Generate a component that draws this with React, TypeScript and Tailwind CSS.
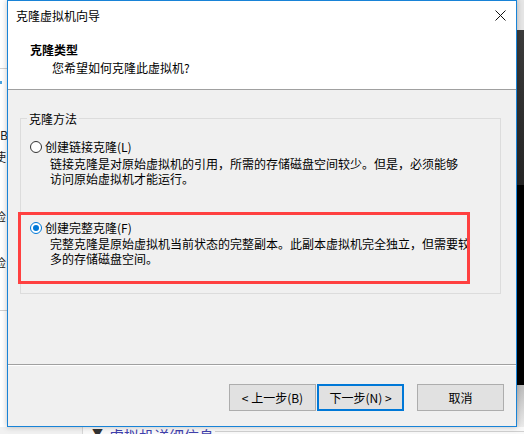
import React from "react";

// Windows-style "clone virtual machine" wizard page, drawn over a bit of the
// desktop behind it (the strips left, right and below the dialog).

const FONT = "font-['Noto_Sans_CJK_SC','Microsoft_YaHei',sans-serif]";

function Radio({ checked }: { checked?: boolean }) {
  if (checked) {
    return (
      <span className="flex h-[12px] w-[12px] shrink-0 items-center justify-center rounded-full border border-[#0078d7] bg-white">
        <span className="h-[6px] w-[6px] rounded-full bg-[#0078d7]" />
      </span>
    );
  }
  return <span className="h-[12px] w-[12px] shrink-0 rounded-full border border-[#333333] bg-white" />;
}

function WizardButton({ label, primary }: { label: string; primary?: boolean }) {
  return (
    <button
      className={
        primary
          ? "flex h-[27px] w-[87px] items-center justify-center border-2 border-[#0078d7] bg-[#e1e1e1] text-[12px] leading-[16px] text-black"
          : "flex h-[27px] w-[87px] items-center justify-center border border-[#adadad] bg-[#e1e1e1] text-[12px] leading-[16px] text-black"
      }
    >
      {label}
    </button>
  );
}

function Desktop() {
  return (
    <>
      {/* left edge of the window behind */}
      <div className="absolute left-0 top-0 h-full w-[7px] overflow-hidden bg-white text-[12px] leading-[16px] text-[#222]">
        <div className="absolute left-0 top-[68px] h-px w-full bg-[#d0d0d0]" />
        <div className="absolute left-0 top-[310px] h-px w-full bg-[#d0d0d0]" />
        <div className="absolute left-0 top-[81px] h-[3px] w-[2px] bg-[#4aa3df]" />
        <span className="absolute left-0 top-[127px]">B</span>
        <span className="absolute left-[-6px] top-[149px]">使</span>
        <span className="absolute left-[-6px] top-[209px]">检</span>
        <span className="absolute left-[-6px] top-[255px]">检</span>
      </div>
      {/* right edge: dark window behind */}
      <div className="absolute left-[517px] top-0 flex h-full w-[7px] flex-col">
        <div className="h-[30px] bg-[#e6e6e6]" />
        <div className="h-[155px] bg-gradient-to-b from-[#3c3c3c] to-[#262626]" />
        <div className="h-[200px] bg-black" />
        <div className="flex-1 bg-gradient-to-b from-[#bdbdbd] to-[#f3f3f3]" />
      </div>
      {/* bottom edge: details pane of the window behind */}
      <div className="absolute left-0 top-[427px] h-[7px] w-full overflow-hidden bg-[#f9f9f9]">
        <div className="absolute left-0 top-0 h-full w-[82px] bg-[#f1f1f1]" />
        <div className="absolute left-[82px] top-0 h-full w-px bg-[#d6d6d6]" />
        <span className="absolute left-[92px] top-[1px] text-[11px] leading-[11px] text-[#333]">▼</span>
        <span className="absolute left-[109px] top-[1px] text-[15px] leading-[15px] text-[#4141ad]">虚拟机详细信息</span>
        <div className="absolute left-[215px] top-[4px] h-px w-[309px] bg-[#d0d0d0]" />
      </div>
    </>
  );
}

export default function App() {
  return (
    <div className={`relative h-[434px] w-[524px] overflow-hidden bg-[#f7f7f7] text-black ${FONT}`}>
      <Desktop />

      <div className="absolute left-[7px] top-0 flex h-[427px] w-[510px] flex-col border border-[#1883d7] bg-[#f0f0f0] text-[12px] shadow-[0_0_6px_rgba(0,0,0,0.25)]">
        {/* title bar */}
        <div className="flex h-[29px] items-center justify-between bg-white pl-[8px] pr-[10px]">
          <span className="leading-[16px]">克隆虚拟机向导</span>
          <svg width="11" height="11" viewBox="0 0 11 11" aria-hidden>
            <path d="M0.5 0.5 L10.5 10.5 M10.5 0.5 L0.5 10.5" stroke="#111" strokeWidth="1" fill="none" />
          </svg>
        </div>

        {/* header */}
        <div className="h-[60px] border-b border-[#a0a0a0] bg-white pl-[22px] pt-[12px]">
          <div className="font-bold leading-[16px]">克隆类型</div>
          <div className="mt-[2px] pl-[22px] leading-[16px]">您希望如何克隆此虚拟机?</div>
        </div>

        {/* body */}
        <div className="flex-1 pl-[12px] pt-[28px]">
          <div className="relative h-[176px] w-[481px] border border-[#dcdcdc] pl-[9px] pt-[20px]">
            <span className="absolute left-[6px] top-[-8px] bg-[#f0f0f0] px-[2px] leading-[16px]">克隆方法</span>

            <div className="flex items-center gap-[3px] leading-[16px]">
              <Radio />
              <span>创建链接克隆(L)</span>
            </div>
            <div className="ml-[20px] mt-[1px] leading-[15px]">
              <div>链接克隆是对原始虚拟机的引用，所需的存储磁盘空间较少。但是，必须能够</div>
              <div>访问原始虚拟机才能运行。</div>
            </div>

            <div className="mt-[34px] flex items-center gap-[3px] leading-[16px]">
              <Radio checked />
              <span>创建完整克隆(F)</span>
            </div>
            <div className="ml-[20px] leading-[15px]">
              <div className="whitespace-nowrap">完整克隆是原始虚拟机当前状态的完整副本。此副本虚拟机完全独立，但需要较</div>
              <div>多的存储磁盘空间。</div>
            </div>
          </div>
        </div>

        {/* etched separator */}
        <div className="h-[2px] border-t border-[#a0a0a0] bg-white" />

        {/* buttons */}
        <div className="flex justify-end pb-[15px] pr-[12px] pt-[18px]">
          <WizardButton label="< 上一步(B)" />
          <div className="ml-px">
            <WizardButton label="下一步(N) >" primary />
          </div>
          <div className="ml-[13px]">
            <WizardButton label="取消" />
          </div>
        </div>
      </div>

      {/* red annotation frame drawn on top of the screenshot */}
      <div className="pointer-events-none absolute left-[18px] top-[212px] h-[72px] w-[452px] border-[3px] border-[#ff4040]" />
    </div>
  );
}
